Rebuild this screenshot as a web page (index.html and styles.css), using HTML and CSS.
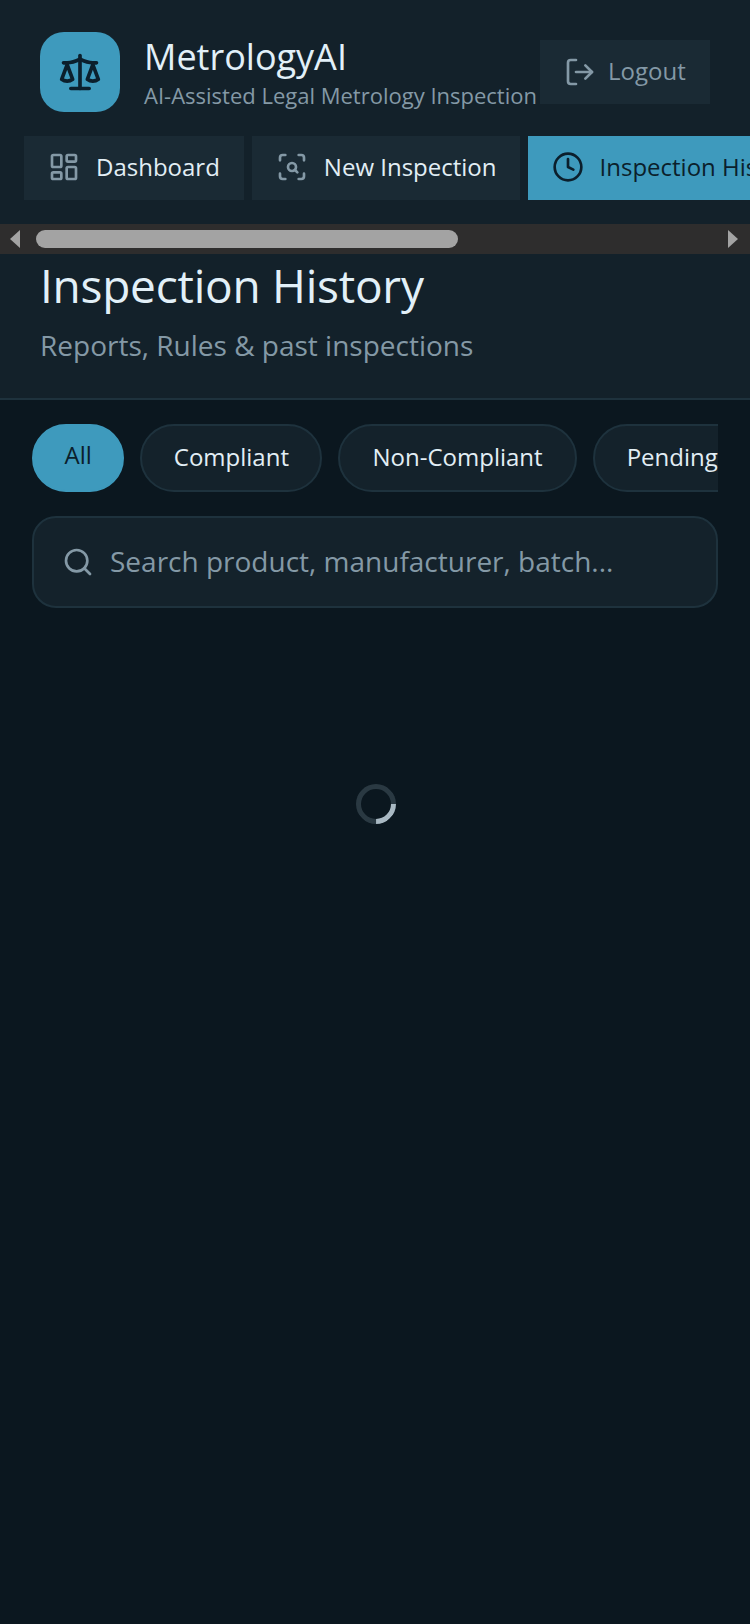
FILE: index.html
```html
<!DOCTYPE html>
<html>

<head>
<meta charset="utf-8">
<meta name="viewport" content="width=device-width, initial-scale=1">

<title>MetrologyAI</title>

<link rel="stylesheet" href="styles.css">
</head>

<body>

	<header class="top">
		<div class="brand-row">
			<div class="logo">
				<svg width="44" height="44" viewBox="0 0 24 24" class="ico">
					<path d="m16 16 3-8 3 8c-.87.65-1.92 1-3 1s-2.13-.35-3-1Z"/>
					<path d="m2 16 3-8 3 8c-.87.65-1.92 1-3 1s-2.13-.35-3-1Z"/>
					<path d="M7 21h10"/>
					<path d="M12 3v18"/>
					<path d="M3 7h2c2 0 5-1 7-2 2 1 5 2 7 2h2"/>
				</svg>
			</div>
			<div class="brand-text">
				<div class="brand-name">MetrologyAI</div>
				<div class="brand-sub">AI-Assisted Legal Metrology Inspection</div>
			</div>
			<button type="button" class="logout">
				<svg width="32" height="32" viewBox="0 0 24 24" class="ico">
					<path d="M9 21H5a2 2 0 0 1-2-2V5a2 2 0 0 1 2-2h4"/>
					<polyline points="16 17 21 12 16 7"/>
					<line x1="21" y1="12" x2="9" y2="12"/>
				</svg>
				<span class="logout-label">Logout</span>
			</button>
		</div>

		<nav class="tabs">
			<div class="tab">
				<svg width="32" height="32" viewBox="0 0 24 24" class="ico tab-ico">
					<rect x="3" y="3" width="7" height="9" rx="1"/>
					<rect x="14" y="3" width="7" height="5" rx="1"/>
					<rect x="14" y="12" width="7" height="9" rx="1"/>
					<rect x="3" y="16" width="7" height="5" rx="1"/>
				</svg>
				Dashboard
			</div>
			<div class="tab tab-new">
				<svg width="32" height="32" viewBox="0 0 24 24" class="ico tab-ico">
					<path d="M3 7V5a2 2 0 0 1 2-2h2"/>
					<path d="M17 3h2a2 2 0 0 1 2 2v2"/>
					<path d="M21 17v2a2 2 0 0 1-2 2h-2"/>
					<path d="M7 21H5a2 2 0 0 1-2-2v-2"/>
					<circle cx="12" cy="12" r="3"/>
					<path d="m16 16-1.9-1.9"/>
				</svg>
				New Inspection
			</div>
			<div class="tab tab-active">
				<svg width="32" height="32" viewBox="0 0 24 24" class="ico">
					<circle cx="12" cy="12" r="10"/>
					<polyline points="12 6 12 12 16 14"/>
				</svg>
				Inspection History
			</div>
		</nav>

		<div class="scrollbar">
			<span class="arrow arrow-left"></span>
			<div class="track"><div class="thumb"></div></div>
			<span class="arrow arrow-right"></span>
		</div>

		<div class="page-head">
			<h1>Inspection History</h1>
			<p>Reports, Rules &amp; past inspections</p>
		</div>
	</header>

	<main class="content">
		<div class="pills">
			<div class="pill pill-active">All</div>
			<div class="pill">Compliant</div>
			<div class="pill pill-wide">Non-Compliant</div>
			<div class="pill pill-wide">Pending</div>
		</div>

		<div class="search">
			<svg width="32" height="32" viewBox="0 0 24 24" class="ico">
				<circle cx="11" cy="11" r="8"/>
				<path d="m21 21-4.3-4.3"/>
			</svg>
			<span class="search-hint">Search product, manufacturer, batch...</span>
		</div>

		<div class="loading">
			<div class="spinner"></div>
		</div>
	</main>

</body>
</html>
```

FILE: styles.css
```css
* {
	box-sizing: border-box;
}

html, body {
	height: 100%;
}

body {
	margin: 0;
	overflow: hidden;
	background-color: #0b171f;
	color: #e2eef5;
	font-family: "Open Sans", sans-serif;
}

.ico {
	flex: none;
	fill: none;
	stroke: currentColor;
	stroke-width: 2;
	stroke-linecap: round;
	stroke-linejoin: round;
}

.top {
	background-color: #13212a;
	border-bottom: 2px solid #1e323d;
	padding-top: 32px;
}

.brand-row {
	display: flex;
	align-items: center;
	padding: 0 40px;
	height: 80px;
}

.logo {
	flex: none;
	display: flex;
	align-items: center;
	justify-content: center;
	width: 80px;
	height: 80px;
	border-radius: 24px;
	background-color: #3e9abd;
	color: #0b1f2c;
}

.brand-text {
	flex: none;
	width: 396px;
	margin-left: 24px;
	white-space: nowrap;
}

.brand-name {
	font-size: 36px;
	line-height: 46px;
	color: #e2f0f8;
}

.brand-sub {
	font-size: 22px;
	line-height: 30px;
	color: #8499a6;
}

.logout {
	display: flex;
	align-items: center;
	gap: 12px;
	height: 64px;
	padding: 0 24px;
	border: 0;
	background-color: #1a2a34;
	color: #8499a6;
	font-family: inherit;
	font-size: 24px;
}

.logout-label {
	margin-top: -4px;
}

.tabs {
	display: flex;
	gap: 8px;
	margin-top: 24px;
	padding-left: 24px;
	overflow: hidden;
}

.tab {
	flex: none;
	display: flex;
	align-items: center;
	gap: 16px;
	height: 64px;
	padding: 0 24px 3px;
	background-color: #1a2a34;
	font-size: 24px;
	white-space: nowrap;
	color: #e2eef5;
}

.tab-new {
	padding-right: 23px;
}

.tab-ico {
	color: #8499a6;
}

.tab-active {
	background-color: #3e9abd;
	color: #0b1f2c;
}

.scrollbar {
	display: flex;
	align-items: center;
	height: 30px;
	margin-top: 24px;
	background-color: #2e2d2d;
}

.arrow {
	flex: none;
	width: 0;
	height: 0;
	border-top: 9px solid transparent;
	border-bottom: 9px solid transparent;
}

.arrow-left {
	margin-left: 10px;
	border-right: 10px solid #a3a3a3;
}

.arrow-right {
	margin-right: 12px;
	border-left: 10px solid #a3a3a3;
}

.track {
	flex: 1;
	padding: 0 16px;
}

.thumb {
	width: 422px;
	height: 18px;
	border-radius: 9px;
	background-color: #a3a3a3;
}

.page-head {
	padding: 0 40px 35px;
}

h1 {
	margin: 0;
	font-size: 46px;
	font-weight: 400;
	letter-spacing: -0.25px;
	line-height: 63px;
	color: #e2f0f8;
}

.page-head p {
	margin: 10px 0 0;
	font-size: 28px;
	line-height: 36px;
	color: #8499a6;
}

.content {
	padding: 24px 32px 0;
}

.pills {
	display: flex;
	gap: 16px;
	overflow: hidden;
}

.pill {
	flex: none;
	height: 68px;
	padding: 0 31.5px;
	border: 2px solid #1e323d;
	border-radius: 34px;
	background-color: #14222b;
	font-size: 24px;
	line-height: 62px;
}

.pill-wide {
	padding: 0 32px;
}

.pill-active {
	padding: 0 30.5px;
	border-color: #3e9abd;
	background-color: #3e9abd;
	color: #0b1f2c;
	line-height: 58px;
}

.search {
	display: flex;
	align-items: center;
	gap: 16px;
	height: 92px;
	margin-top: 24px;
	padding: 0 28px;
	border: 2px solid #1e323d;
	border-radius: 24px;
	background-color: #14222b;
	font-size: 28px;
	color: #8499a6;
}

.search-hint {
	margin-top: -2px;
}

.loading {
	display: flex;
	justify-content: center;
	padding-top: 176px;
	padding-left: 2px;
}

.spinner {
	width: 40px;
	height: 40px;
	border: 5px solid #2a3942;
	border-bottom-color: #a9b9c3;
	border-radius: 50%;
	transform: rotate(-45deg);
}
```
